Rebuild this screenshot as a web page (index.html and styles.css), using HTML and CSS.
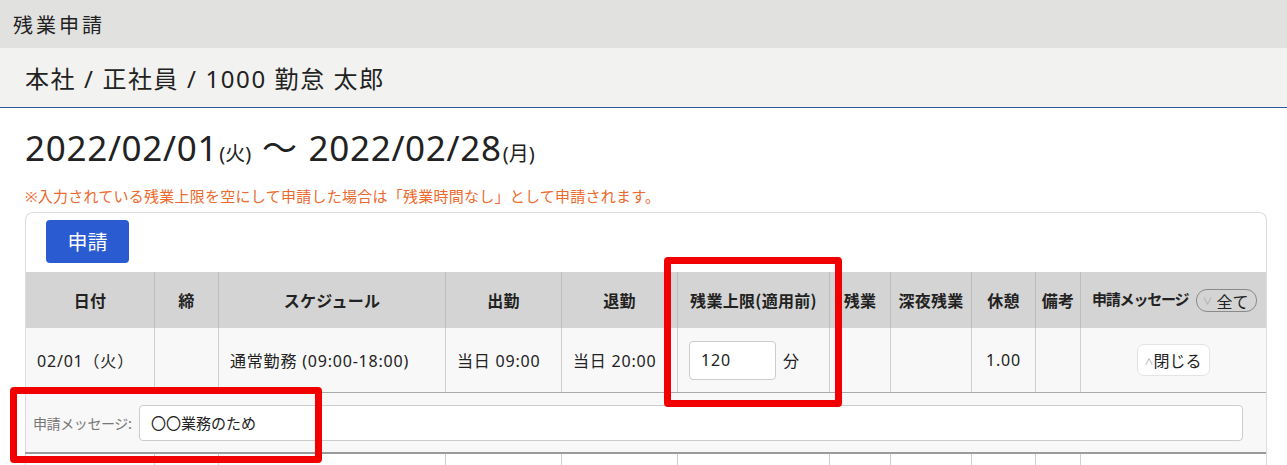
FILE: index.html
```html
<!DOCTYPE html>
<html lang="ja">
<head>
<meta charset="utf-8">
<title>残業申請</title>
<link rel="stylesheet" href="styles.css">
</head>
<body>
<div class="page">
  <header class="topbar">残業申請</header>
  <div class="subbar">本社 / 正社員 / 1000 勤怠 太郎</div>
  <main class="content">
    <h1 class="period">2022/02/01<small>(火)</small> <span class="tilde">〜</span> 2022/02/28<small>(月)</small></h1>
    <p class="warning">※入力されている残業上限を空にして申請した場合は「残業時間なし」として申請されます。</p>
    <section class="card">
      <div class="toolbar"><button class="btn-primary">申請</button></div>
      <table class="grid">
        <colgroup>
          <col class="c-date"><col class="c-close"><col class="c-sched"><col class="c-in"><col class="c-out"><col class="c-limit"><col class="c-ot"><col class="c-night"><col class="c-rest"><col class="c-note"><col class="c-msg">
        </colgroup>
        <thead>
          <tr>
            <th>日付</th><th>締</th><th>スケジュール</th><th>出勤</th><th>退勤</th><th>残業上限(適用前)</th><th>残業</th><th>深夜残業</th><th>休憩</th><th>備考</th>
            <th class="th-msg">申請メッセージ <span class="pill"><span class="chev">&#x2228;</span>全て</span></th>
          </tr>
        </thead>
        <tbody>
          <tr class="row-main">
            <td class="left">02/01（火）</td>
            <td></td>
            <td class="left">通常勤務 (09:00-18:00)</td>
            <td class="left">当日 09:00</td>
            <td class="left">当日 20:00</td>
            <td class="left"><span class="num-input">120</span><span class="unit">分</span></td>
            <td></td>
            <td></td>
            <td class="center">1.00</td>
            <td></td>
            <td class="center"><span class="close-btn"><span class="caret">&#x2227;</span>閉じる</span></td>
          </tr>
          <tr class="row-msg">
            <td colspan="11">
              <div class="msg-line">
                <span class="msg-label">申請メッセージ:</span>
                <span class="msg-input">〇〇業務のため</span>
              </div>
            </td>
          </tr>
          <tr class="row-next">
            <td></td><td></td><td></td><td></td><td></td><td></td><td></td><td></td><td></td><td></td><td></td>
          </tr>
        </tbody>
      </table>
    </section>
  </main>
  <div class="mark mark-limit"></div>
  <div class="mark mark-msg"></div>
</div>
</body>
</html>
```

FILE: styles.css
```css
html, body {
  margin: 0;
  padding: 0;
  background: #ffffff;
  overflow: hidden;
}
body {
  font-family: "Noto Sans", "Noto Sans CJK JP", sans-serif;
  color: #222;
}
.page {
  position: relative;
  width: 1287px;
  height: 465px;
  overflow: hidden;
}
.topbar {
  height: 48px;
  line-height: 52px;
  background: #e1e1df;
  padding-left: 13px;
  font-size: 20px;
  letter-spacing: 3px;
  color: #222;
}
.subbar {
  height: 59px;
  line-height: 62px;
  background: #f2f2f0;
  border-bottom: 1px solid #2d5ba3;
  padding-left: 25px;
  font-size: 24px;
  letter-spacing: 1.6px;
  color: #222;
}
.content {
  padding: 0 20px 0 25px;
}
.period {
  margin: 13px 0 0 0;
  font-size: 35px;
  font-weight: 400;
  line-height: 54px;
  height: 54px;
  color: #222;
  letter-spacing: 0.7px;
}
.period small {
  font-size: 20px;
  margin-left: 1px;
  letter-spacing: 0;
}
.tilde {
  margin: 0 1px;
}
.warning {
  margin: 10px 0 0 0;
  font-size: 15px;
  line-height: 22px;
  height: 22px;
  color: #ec6a2e;
  letter-spacing: 0.25px;
}
.card {
  margin-top: 5px;
  width: 1240px;
  border: 1px solid #dddddd;
  border-bottom: none;
  border-radius: 8px 8px 0 0;
  background: #fff;
}
.toolbar {
  padding: 7px 0 9px 20px;
  display: flex;
}
.btn-primary {
  width: 83px;
  height: 43px;
  border: none;
  border-radius: 4px;
  background: #2a5bd1;
  color: #fff;
  font-family: "Noto Sans CJK JP", sans-serif;
  font-size: 20px;
  padding: 0;
}
.grid {
  width: 1241px;
  border-collapse: collapse;
  table-layout: fixed;
  margin-left: -1px;
}
.c-date { width: 129px; }
.c-close { width: 64px; }
.c-sched { width: 227px; }
.c-in { width: 116px; }
.c-out { width: 116px; }
.c-limit { width: 152px; }
.c-ot { width: 61px; }
.c-night { width: 81px; }
.c-rest { width: 64px; }
.c-note { width: 45px; }
.c-msg { width: auto; }
.grid th {
  height: 56px;
  padding: 0;
  background: #d4d4d4;
  font-family: "Noto Sans CJK JP", sans-serif;
  font-size: 16px;
  font-weight: 700;
  color: #222;
  border-left: 1px solid #bdbdbd;
  text-align: center;
  white-space: nowrap;
  letter-spacing: 0.3px;
}
.grid th:first-child { border-left: 1px solid #dddddd; }
.grid th.th-msg {
  text-align: left;
  padding-left: 11px;
  font-size: 15px;
  letter-spacing: -1.2px;
}
.grid td {
  padding: 0;
  border-left: 1px solid #cfcfcf;
  font-size: 16px;
  color: #222;
  background: #f8f8f8;
  white-space: nowrap;
  letter-spacing: 0.8px;
}
.grid td:first-child { border-left: 1px solid #dddddd; }
.row-main td {
  height: 64px;
  border-bottom: 1px solid #a9a9a9;
}
.row-main td.left { padding-left: 11px; }
.row-main td.center { text-align: center; }
.pill {
  display: inline-flex;
  align-items: center;
  height: 21px;
  padding: 0 7px 0 6px;
  margin-left: 5px;
  border: 1px solid #8a8a8a;
  border-radius: 11px;
  font-weight: 400;
  font-size: 16px;
  color: #222;
  vertical-align: middle;
  line-height: 1;
  letter-spacing: 0;
}
.chev {
  font-size: 10px;
  color: #aaa;
  margin-right: 4px;
}
.num-input {
  display: inline-block;
  box-sizing: border-box;
  width: 87px;
  height: 39px;
  line-height: 37px;
  padding-left: 11px;
  border: 1px solid #cccccc;
  border-radius: 4px;
  background: #fff;
  vertical-align: middle;
}
.unit {
  margin-left: 7px;
  vertical-align: middle;
}
.close-btn {
  display: inline-block;
  box-sizing: border-box;
  height: 32px;
  line-height: 30px;
  padding: 0 7px 0 6px;
  border: 1px solid #e4e4e4;
  border-radius: 7px;
  background: #fff;
  font-family: "Noto Sans CJK JP", sans-serif;
  font-size: 16px;
  letter-spacing: 0;
}
.caret {
  font-size: 9px;
  color: #999;
  vertical-align: 2px;
}
.row-msg td {
  height: 59px;
  border-bottom: 2px solid #9a9a9a;
  padding: 0;
  letter-spacing: 0;
}
.msg-line {
  display: flex;
  align-items: center;
  padding-left: 7px;
  padding-right: 23px;
}
.msg-label {
  font-family: "Noto Sans CJK JP", sans-serif;
  font-size: 14px;
  color: #777;
  letter-spacing: -0.4px;
  width: 106px;
}
.msg-input {
  flex: 1;
  box-sizing: border-box;
  height: 36px;
  line-height: 34px;
  border: 1px solid #cccccc;
  border-radius: 4px;
  background: #fff;
  padding-left: 11px;
  font-family: "Noto Sans CJK JP", sans-serif;
  font-size: 15px;
}
.row-next td {
  height: 30px;
  background: #fff;
}
.mark {
  position: absolute;
  box-sizing: border-box;
  border: 7px solid #f20000;
  border-radius: 4px;
}
.mark-limit {
  left: 664px;
  top: 257px;
  width: 178px;
  height: 150px;
}
.mark-msg {
  left: 10px;
  top: 387px;
  width: 312px;
  height: 76px;
}
```
